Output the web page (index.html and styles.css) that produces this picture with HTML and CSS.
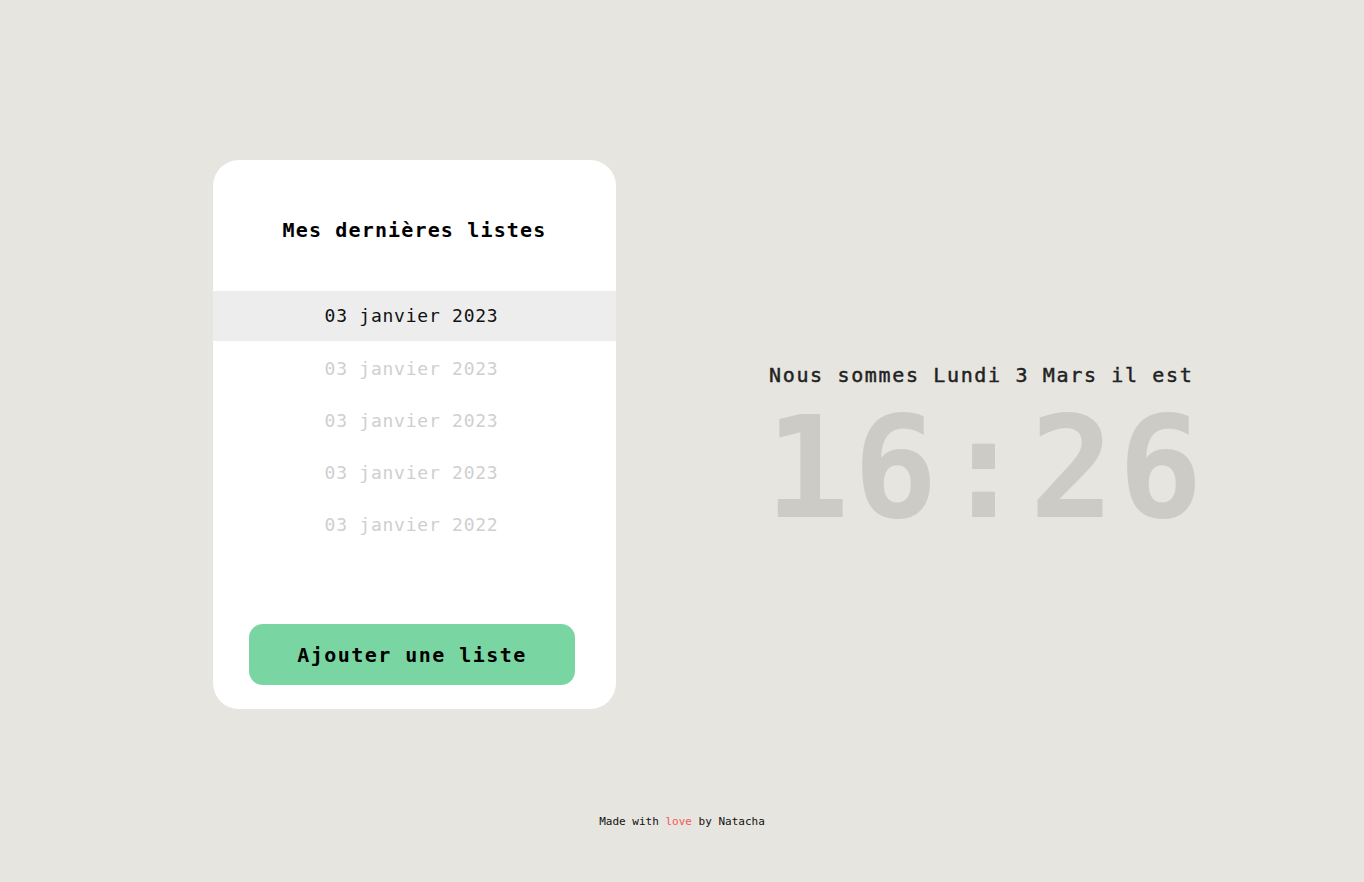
FILE: index.html
```html
<!DOCTYPE html>
<html lang="fr">
<head>
<meta charset="utf-8">
<title>Mes listes</title>
<link rel="stylesheet" href="styles.css">
</head>
<body>
<main class="layout">
  <section class="card">
    <h1 class="card-title">Mes dernières listes</h1>
    <ul class="lists">
      <li class="list-item active">03 janvier 2023</li>
      <li class="list-item">03 janvier 2023</li>
      <li class="list-item">03 janvier 2023</li>
      <li class="list-item">03 janvier 2023</li>
      <li class="list-item">03 janvier 2022</li>
    </ul>
    <button class="add-btn">Ajouter une liste</button>
  </section>
  <section class="clock-block">
    <p class="today">Nous sommes Lundi 3 Mars il est</p>
    <p class="clock">16:26</p>
  </section>
</main>
<footer class="footer">Made with <span class="love">love</span> by Natacha</footer>
</body>
</html>
```
FILE: styles.css
```css
* { box-sizing: border-box; }
html, body { margin: 0; padding: 0; }
body {
  background: #e6e5e0;
  font-family: "DejaVu Sans Mono", "Liberation Mono", monospace;
  color: #111;
  height: 882px;
  overflow: hidden;
}
.layout {
  display: flex;
  align-items: flex-start;
  gap: 153px;
  padding: 160px 0 0 213px;
}
.card {
  width: 403px;
  height: 549px;
  background: #fff;
  border-radius: 26px;
  padding: 58px 0 0;
}
.card-title {
  margin: 0 0 49px;
  font-size: 20px;
  line-height: 24px;
  font-weight: bold;
  letter-spacing: 1.15px;
  text-align: center;
  color: #000;
}
.lists {
  list-style: none;
  margin: 0;
  padding: 0;
}
.list-item {
  height: 52px;
  line-height: 52px;
  text-align: center;
  font-size: 18px;
  letter-spacing: 0.75px;
  color: #cfcfcf;
  padding-right: 6px;
}
.list-item.active {
  background: #ededed;
  color: #111;
  height: 50px;
  line-height: 50px;
  margin-bottom: 2px;
}
.add-btn {
  display: block;
  margin: 73px 0 0 36px;
  width: 326px;
  height: 61px;
  border: none;
  border-radius: 14px;
  background: #79d6a2;
  font-family: inherit;
  font-size: 20px;
  font-weight: bold;
  letter-spacing: 1.45px;
  color: #000;
  cursor: pointer;
}
.clock-block {
  margin-top: 203px;
}
.today {
  margin: 0 0 12px;
  font-size: 20px;
  line-height: 24px;
  letter-spacing: 1.65px;
  color: #222;
  -webkit-text-stroke: 0.45px #222;
}
.clock {
  margin: 0 0 0 -4px;
  font-size: 140px;
  line-height: 140px;
  font-weight: bold;
  letter-spacing: 4px;
  color: #cdcbc6;
}
.footer {
  margin-top: 106px;
  text-align: center;
  font-size: 11px;
  line-height: 14px;
  color: #111;
}
.love { color: #f05a5a; }
```
